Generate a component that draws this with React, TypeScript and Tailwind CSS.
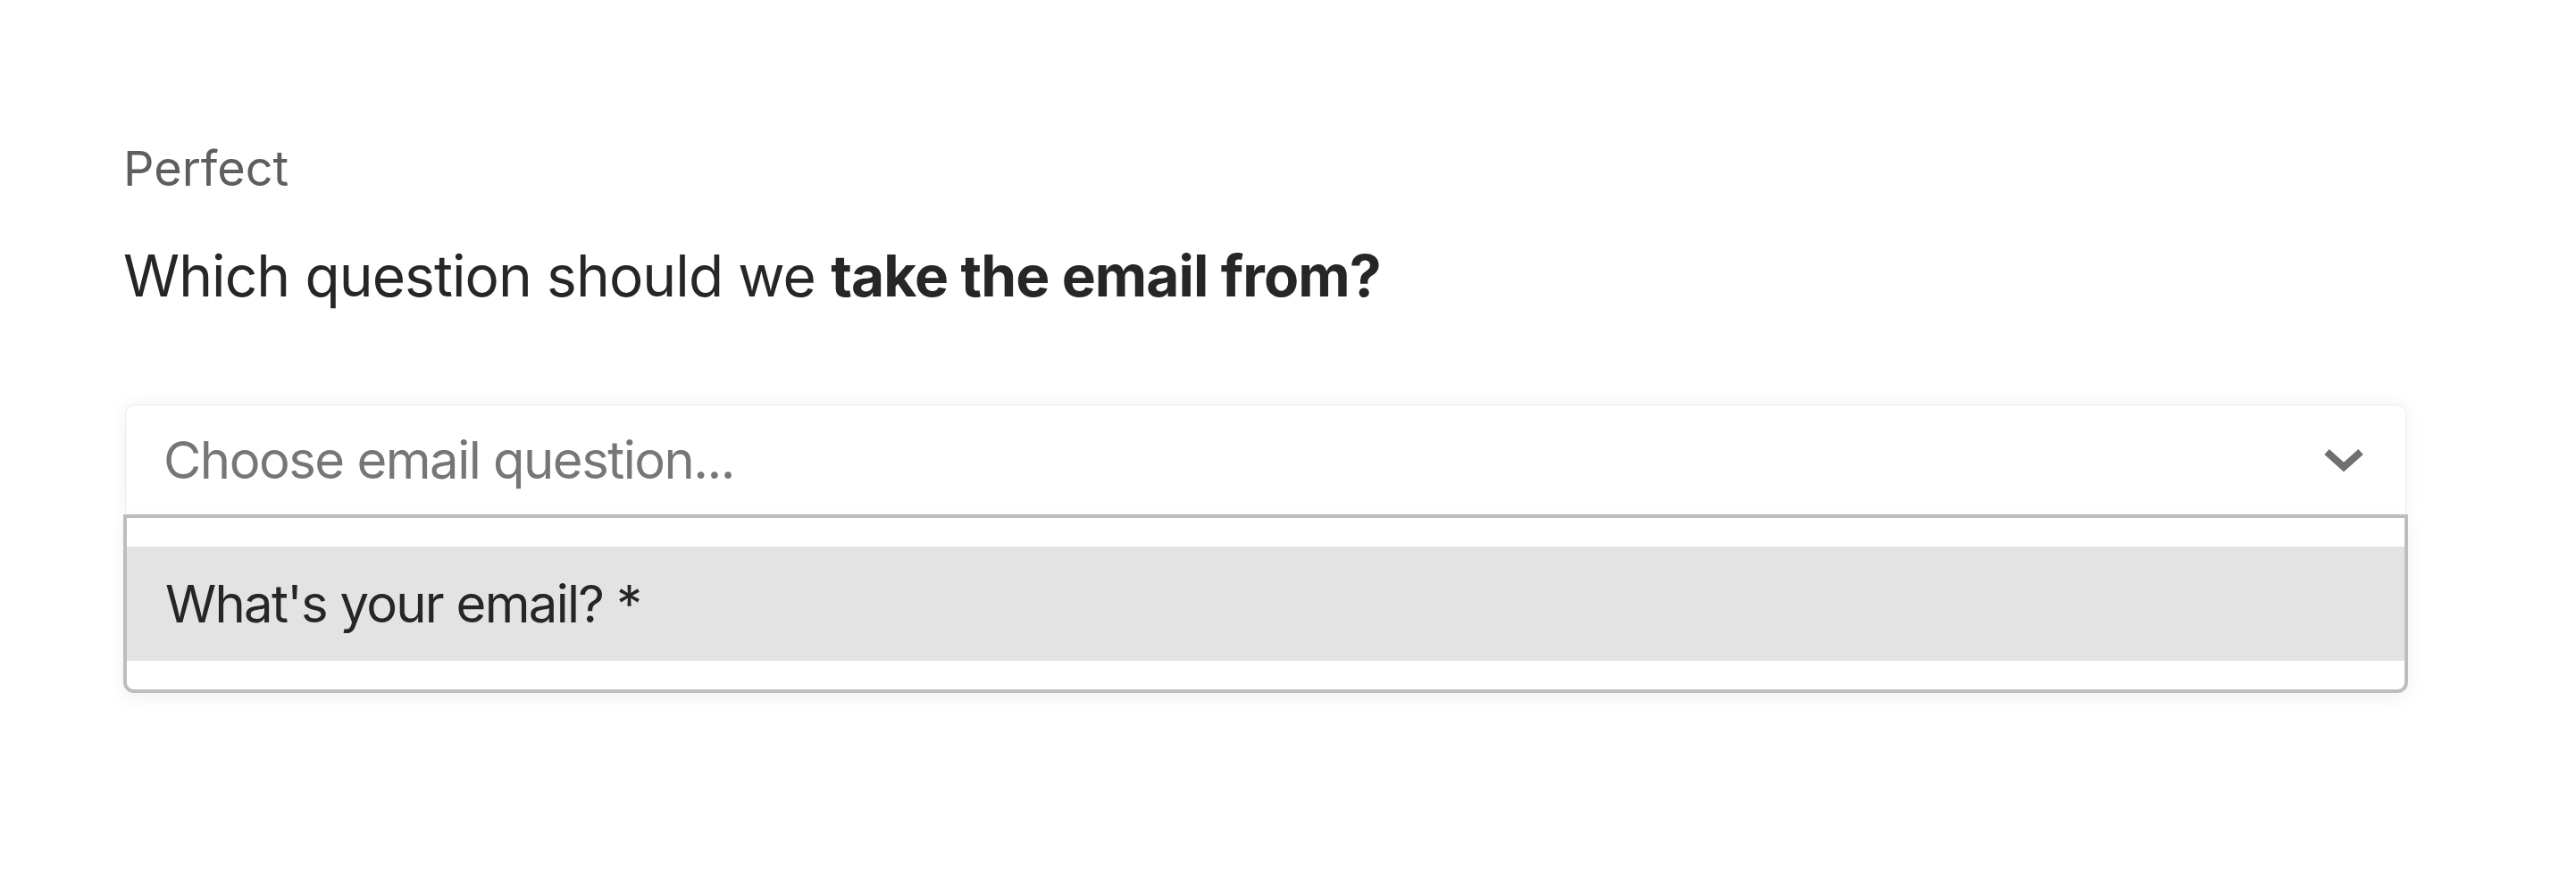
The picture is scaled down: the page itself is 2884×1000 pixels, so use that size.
import React from "react";

export default function App() {
  return (
    <div className="w-[2884px] h-[1000px] bg-white" style={{ fontFamily: "Inter, 'Noto Sans', sans-serif" }}>
      <div className="pl-[138px] pr-[188px] pt-[156px] flex flex-col">
        <div className="text-[54px] leading-[65px] text-[#5e5e5e]">Perfect</div>
        <div className="mt-[49px] text-[64px] leading-[77px] text-[#262626] tracking-[-0.9px]">
          Which question should we <span className="font-bold">take the email from?</span>
        </div>
        <div className="mt-[106px] flex flex-col w-[2558px]">
          <div className="mx-[2px] h-[123px] bg-white border border-[#ececec] border-b-0 rounded-t-[10px] shadow-[0_0_20px_rgba(0,0,0,0.06)] flex items-center justify-between pl-[42px] pr-[46px]">
            <span className="text-[58px] text-[#767676] leading-none tracking-[-1.5px]">Choose email question...</span>
            <svg width="46" height="26" viewBox="0 0 46 26" className="block">
              <polyline points="4,4 23,21 42,4" fill="none" stroke="#6f6f6f" strokeWidth="8" strokeLinecap="butt" strokeLinejoin="miter" />
            </svg>
          </div>
          <div className="border-[4px] border-[#bdbdbd] rounded-b-[12px] bg-white py-[32px] shadow-[0_6px_20px_rgba(0,0,0,0.06)]">
            <div className="h-[128px] bg-[#e3e3e3] flex items-center pl-[43px]">
              <span className="text-[58px] text-[#262626] leading-none tracking-[-1.7px]">What's your email? *</span>
            </div>
          </div>
        </div>
      </div>
    </div>
  );
}
